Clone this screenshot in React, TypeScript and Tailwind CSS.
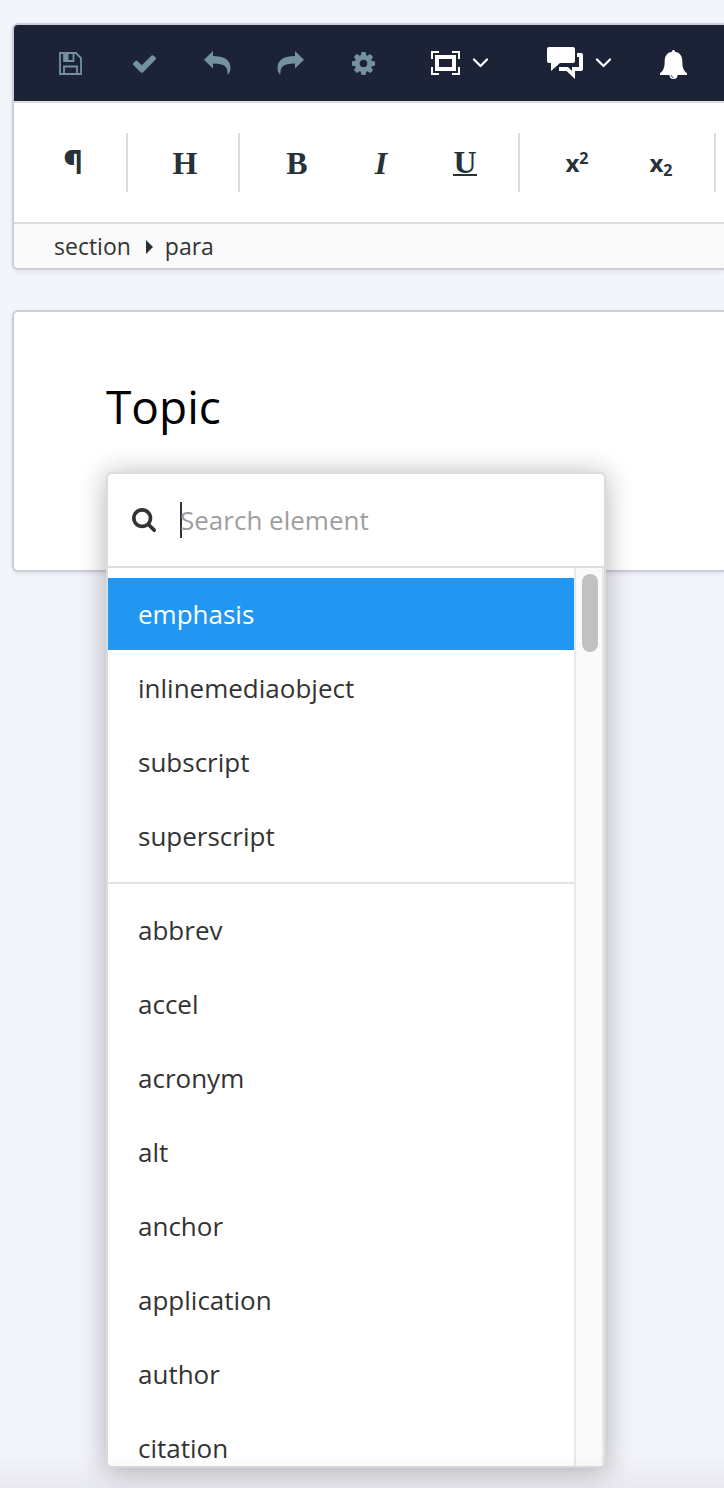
import * as React from "react";

const PRIMARY_ELEMENTS = ["emphasis", "inlinemediaobject", "subscript", "superscript"];

const ALL_ELEMENTS = [
  "abbrev",
  "accel",
  "acronym",
  "alt",
  "anchor",
  "application",
  "author",
  "citation",
];

function SaveIcon() {
  return (
    <svg width="25" height="25" viewBox="0 -1 25 25" fill="none" stroke="currentColor" strokeWidth="1.8">
      <path d="M1 1h16l5 5v16H1z" />
      <path d="M5 22v-7.500h13V22M5 1v8h9.500V1" />
      <path d="M5 1h4.500v8H5z" fill="currentColor" stroke="none" />
    </svg>
  );
}

function CheckIcon() {
  return (
    <svg width="25" height="25" viewBox="56 56 1680 1680" fill="currentColor">
      <path d="M1671 566q0 40-28 68l-724 724-136 136q-28 28-68 28t-68-28l-136-136-362-362q-28-28-28-68t28-68l136-136q28-28 68-28t68 28l294 295 656-657q28-28 68-28t68 28l136 136q28 28 28 68z" />
    </svg>
  );
}

function UndoIcon({ flipped = false }: { flipped?: boolean }) {
  return (
    <svg
      width="27"
      height="24"
      viewBox="0 0 27 24"
      fill="currentColor"
      className={flipped ? "shrink-0 -scale-x-100" : "shrink-0"}
    >
      <path d="M0 8.800 9 0v5c10.500 0 17.500 3.500 17.500 12 0 3-1.200 5.500-2.800 6.800C23.700 16 21.500 12.600 9 12.600v5z" />
    </svg>
  );
}

function CogIcon() {
  return (
    <svg width="25" height="25" viewBox="63 63 1666 1666" fill="currentColor">
      <path d="M1152 896q0-106-75-181t-181-75-181 75-75 181 75 181 181 75 181-75 75-181zm512-109v222q0 12-8 23t-20 13l-185 28q-19 54-39 91 35 50 107 138 10 12 10 25t-9 23q-27 37-99 108t-94 71q-12 0-26-9l-138-108q-44 23-91 38-16 136-29 186-7 28-36 28h-222q-14 0-24.500-8.500t-11.500-21.500l-28-184q-49-16-90-37l-141 107q-10 9-25 9-14 0-25-11-126-114-165-168-7-10-7-23 0-12 8-23 15-21 51-66.500t54-70.500q-27-50-41-99l-183-27q-13-2-21-12.500t-8-23.500v-222q0-12 8-23t19-13l186-28q14-46 39-92-40-57-107-138-10-12-10-24 0-10 9-23 26-36 98.500-107.500t94.500-71.500q13 0 26 10l138 107q44-23 91-38 16-136 29-186 7-28 36-28h222q14 0 24.500 8.500t11.500 21.500l28 184q49 16 90 37l142-107q9-9 24-9 13 0 25 10 129 119 165 170 7 8 7 22 0 12-8 23-15 21-51 66.500t-54 70.500q26 50 41 98l183 28q13 2 21 12.500t8 23.500z" />
    </svg>
  );
}

function FrameIcon() {
  return (
    <svg width="29" height="24" viewBox="0 0 29 24" fill="none" stroke="currentColor">
      <path strokeWidth="2" d="M1 8V1h7M21 1h7v7M28 16v7h-7M8 23H1v-7" />
      <path strokeWidth="4" d="M6 6h17v12H6z" />
    </svg>
  );
}

function CommentsIcon() {
  return (
    <svg width="36" height="32" viewBox="0 0 36 32" fill="currentColor">
      <path d="M2 0h24a2 2 0 0 1 2 2v12a2 2 0 0 1-2 2H13l-9 8v-8H2a2 2 0 0 1-2-2V2a2 2 0 0 1 2-2z" />
      <path d="M30 6h4a2 2 0 0 1 2 2v14a2 2 0 0 1-2 2h-6v8l-8.500-8H12v-4h9l4 4v-4h7V10h-2z" />
    </svg>
  );
}

function BellIcon() {
  return (
    <svg width="28" height="30" viewBox="0 0 28 30" fill="currentColor">
      <path d="M13.500 0c.9 0 1.500.7 1.500 1.700 5 .7 7.300 4.600 7.300 9.300 0 6.500 1.200 9.700 4.700 12.300v1.700h-9.500a4 4 0 0 1-8 0H0v-1.700c3.500-2.600 4.700-5.800 4.700-12.300 0-4.700 2.300-8.600 7.300-9.300C12 .7 12.600 0 13.500 0z" />
      <path d="M11.300 25.300a2.300 2.300 0 0 0 2.200 2.200" fill="none" stroke="#1d2337" strokeWidth=".8" />
    </svg>
  );
}

function ChevronIcon() {
  return (
    <svg
      width="16"
      height="10"
      viewBox="0 0 16 10"
      fill="none"
      stroke="currentColor"
      strokeWidth="2.200"
      strokeLinecap="round"
      strokeLinejoin="round"
    >
      <path d="m2 1.500 6.500 6.500L15 1.500" />
    </svg>
  );
}

function SearchIcon() {
  return (
    <svg width="24" height="24" viewBox="0 128 1664 1664" fill="currentColor">
      <path d="M1152 832q0-185-131.500-316.500t-316.500-131.500-316.500 131.500-131.500 316.500 131.500 316.500 316.500 131.500 316.500-131.500 131.500-316.500zm512 832q0 52-38 90t-90 38q-54 0-90-38l-343-342q-179 124-399 124-143 0-273.500-55.500t-225-150-150-225-55.500-273.500 55.500-273.500 150-225 225-150 273.500-55.500 273.500 55.500 225 150 150 225 55.500 273.500q0 220-124 399l343 343q37 37 37 90z" />
    </svg>
  );
}

function ToolButton({ label, children }: { label: string; children: React.ReactNode }) {
  return (
    <button type="button" aria-label={label} className="flex w-[25px] shrink-0 items-center justify-center">
      {children}
    </button>
  );
}

function FormatButton({ label, children }: { label: string; children: React.ReactNode }) {
  return (
    <button
      type="button"
      aria-label={label}
      className="flex h-14 w-[84px] shrink-0 items-center justify-center font-['Liberation_Serif',serif] text-[32px] leading-10 font-bold"
    >
      {children}
    </button>
  );
}

function Divider() {
  return <div className="mr-[15px] ml-[11px] h-[59px] w-0.5 shrink-0 bg-[#dcdcdc]" />;
}

function ElementGroup({
  items,
  selected,
  onSelect,
}: {
  items: string[];
  selected: string;
  onSelect: (name: string) => void;
}) {
  return (
    <ul className="flex flex-col gap-0.5">
      {items.map((name) => (
        <li key={name}>
          <button
            type="button"
            onClick={() => onSelect(name)}
            className={`block h-[72px] w-full px-[30px] text-left text-[26px] ${
              name === selected ? "bg-[#2196f3] text-white" : "text-[#333333]"
            }`}
          >
            {name}
          </button>
        </li>
      ))}
    </ul>
  );
}

function ElementMenu() {
  const [query, setQuery] = React.useState("");
  const [selected, setSelected] = React.useState("emphasis");
  const matches = (name: string) => name.includes(query.toLowerCase());

  return (
    <div className="absolute top-40 left-[92px] z-10 w-[500px] overflow-hidden rounded-md border-2 border-[#dcdcdc] bg-white shadow-[0_2px_28px_rgba(0,0,0,0.3)]">
      {/* Search */}
      <label className="flex h-[94px] items-center border-b-2 border-[#dcdcdc] px-6 text-[#333333]">
        <SearchIcon />
        <span className="-mr-0.5 ml-6 h-9 w-0.5 bg-[#333333]" />
        <input
          type="text"
          aria-label="Search element"
          placeholder="Search element"
          value={query}
          onChange={(e) => setQuery(e.target.value)}
          className="min-w-0 flex-1 text-[26px] caret-transparent outline-none placeholder:text-[#9e9e9e]"
        />
      </label>

      {/* Element list */}
      <div className="flex max-h-[898px]">
        <div className="min-w-0 flex-1 overflow-hidden pt-2.5">
          <ElementGroup items={PRIMARY_ELEMENTS.filter(matches)} selected={selected} onSelect={setSelected} />
          <hr className="my-2.5 border-t-2 border-[#e2e2e2]" />
          <ElementGroup items={ALL_ELEMENTS.filter(matches)} selected={selected} onSelect={setSelected} />
        </div>
        <div className="w-[30px] border-x-2 border-[#e8e8e8] bg-[#fafafa] px-1.5 pt-1.5">
          <div className="h-[78px] w-4 rounded-full bg-[#c1c1c1]" />
        </div>
      </div>
    </div>
  );
}

export default function App() {
  return (
    <div className="relative min-h-screen overflow-hidden bg-[#f4f5fb] pt-[23px] pl-3 font-['Open_Sans','Noto_Sans',sans-serif]">
      <header className="overflow-hidden rounded-l-md border-2 border-r-0 border-[#cbcdd9] bg-white shadow-[0_2px_4px_rgba(0,0,0,0.08)]">
        {/* Main toolbar */}
        <div className="flex h-[78px] items-center border-b-2 border-[#dcdcdc] bg-[#1d2337] pl-[45px] text-white">
          <div className="flex items-center gap-12 text-[#7391a0]">
            <ToolButton label="Save">
              <SaveIcon />
            </ToolButton>
            <ToolButton label="Apply">
              <CheckIcon />
            </ToolButton>
            <ToolButton label="Undo">
              <UndoIcon />
            </ToolButton>
            <ToolButton label="Redo">
              <UndoIcon flipped />
            </ToolButton>
            <ToolButton label="Settings">
              <CogIcon />
            </ToolButton>
          </div>
          <button type="button" aria-label="View" className="ml-[55px] flex shrink-0 items-center gap-3">
            <FrameIcon />
            <ChevronIcon />
          </button>
          <button type="button" aria-label="Comments" className="ml-[59px] flex shrink-0 items-center gap-3">
            <CommentsIcon />
            <ChevronIcon />
          </button>
          <button type="button" aria-label="Notifications" className="ml-[49px] shrink-0 pt-1">
            <BellIcon />
          </button>
        </div>

        {/* Formatting toolbar */}
        <div className="flex h-[121px] items-center border-b-2 border-[#dcdcdc] pl-[17px] text-[#263238]">
          <FormatButton label="Paragraph">
            <span className="font-['Inter',sans-serif]">¶</span>
          </FormatButton>
          <Divider />
          <FormatButton label="Heading">H</FormatButton>
          <Divider />
          <FormatButton label="Bold">B</FormatButton>
          <FormatButton label="Italic">
            <i>I</i>
          </FormatButton>
          <FormatButton label="Underline">
            <span className="border-b-2 border-current leading-6">U</span>
          </FormatButton>
          <Divider />
          <FormatButton label="Superscript">
            <span className="font-['Open_Sans',sans-serif] text-2xl">
              x<sup className="text-base">2</sup>
            </span>
          </FormatButton>
          <FormatButton label="Subscript">
            <span className="font-['Open_Sans',sans-serif] text-2xl">
              x<sub className="text-base">2</sub>
            </span>
          </FormatButton>
          <Divider />
        </div>

        {/* Breadcrumb */}
        <nav className="flex h-11 items-center bg-[#fafafa] pl-10 text-[23px] text-[#333333]">
          <a href="#section">section</a>
          <svg width="7" height="14" viewBox="0 0 7 14" className="mt-0.5 mr-3 ml-[15px]">
            <path d="M0 0l7 7-7 7z" fill="#263238" />
          </svg>
          <a href="#para">para</a>
        </nav>
      </header>

      {/* Document */}
      <main className="relative mt-10 min-h-[262px] rounded-l-md border-2 border-r-0 border-[#cbcdd9] bg-white px-[92px] pt-[62px] shadow-[0_2px_4px_rgba(0,0,0,0.08)]">
        <h1 className="text-[46px] leading-[64px] text-black">Topic</h1>
        <ElementMenu />
      </main>

      <div className="pointer-events-none absolute inset-x-0 bottom-0 z-20 h-9 bg-linear-to-b from-transparent to-black/5" />
    </div>
  );
}
